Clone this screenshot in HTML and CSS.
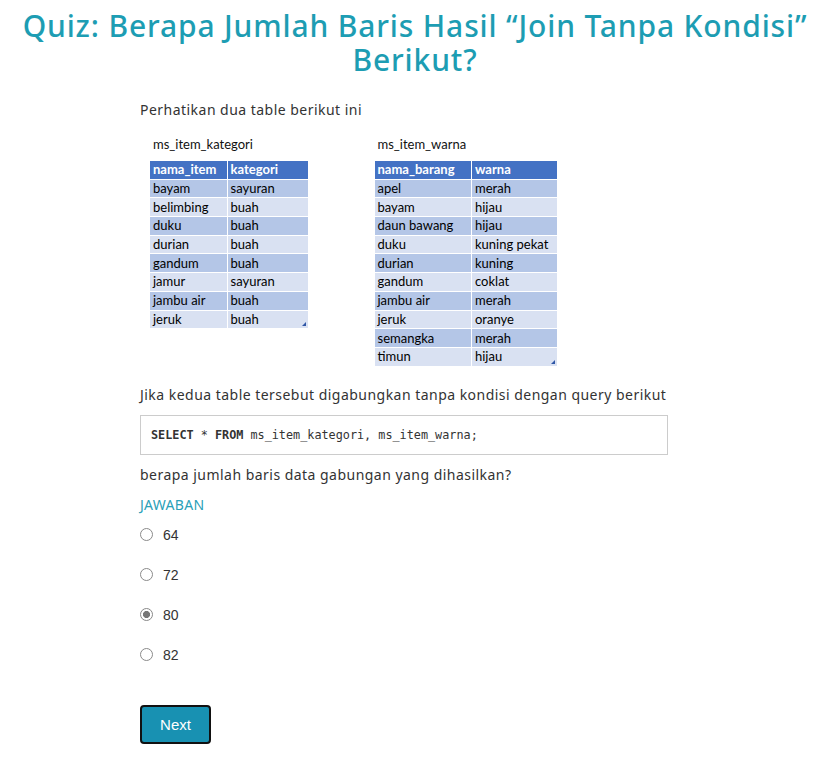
FILE: index.html
```html
<!DOCTYPE html>
<html lang="id">
<head>
<meta charset="utf-8">
<title>Quiz</title>
<link rel="stylesheet" href="styles.css">
</head>
<body>
<h1 class="title">Quiz: Berapa Jumlah Baris Hasil “Join Tanpa Kondisi” Berikut?</h1>
<main class="content">
  <p class="text intro">Perhatikan dua table berikut ini</p>
  <div class="tables">
    <div class="xl xl-first">
      <div class="xl-label">ms_item_kategori</div>
      <table class="sheet">
        <colgroup><col class="c76"><col class="c81"></colgroup>
        <tr class="head"><th>nama_item</th><th>kategori</th></tr>
        <tr class="odd"><td>bayam</td><td>sayuran</td></tr>
        <tr class="even"><td>belimbing</td><td>buah</td></tr>
        <tr class="odd"><td>duku</td><td>buah</td></tr>
        <tr class="even"><td>durian</td><td>buah</td></tr>
        <tr class="odd"><td>gandum</td><td>buah</td></tr>
        <tr class="even"><td>jamur</td><td>sayuran</td></tr>
        <tr class="odd"><td>jambu air</td><td>buah</td></tr>
        <tr class="even"><td>jeruk</td><td class="last">buah<span class="grip"></span></td></tr>
      </table>
    </div>
    <div class="xl xl-second">
      <div class="xl-label">ms_item_warna</div>
      <table class="sheet">
        <colgroup><col class="c96"><col class="c86"></colgroup>
        <tr class="head"><th>nama_barang</th><th>warna</th></tr>
        <tr class="odd"><td>apel</td><td>merah</td></tr>
        <tr class="even"><td>bayam</td><td>hijau</td></tr>
        <tr class="odd"><td>daun bawang</td><td>hijau</td></tr>
        <tr class="even"><td>duku</td><td>kuning pekat</td></tr>
        <tr class="odd"><td>durian</td><td>kuning</td></tr>
        <tr class="even"><td>gandum</td><td>coklat</td></tr>
        <tr class="odd"><td>jambu air</td><td>merah</td></tr>
        <tr class="even"><td>jeruk</td><td>oranye</td></tr>
        <tr class="odd"><td>semangka</td><td>merah</td></tr>
        <tr class="even"><td>timun</td><td class="last">hijau<span class="grip"></span></td></tr>
      </table>
    </div>
  </div>
  <p class="text">Jika kedua table tersebut digabungkan tanpa kondisi dengan query berikut</p>
  <pre class="code"><b>SELECT</b> * <b>FROM</b> ms_item_kategori, ms_item_warna;</pre>
  <p class="text">berapa jumlah baris data gabungan yang dihasilkan?</p>
  <div class="answer-label">JAWABAN</div>
  <div class="options">
    <label class="opt"><input type="radio" name="a" value="64"><span>64</span></label>
    <label class="opt"><input type="radio" name="a" value="72"><span>72</span></label>
    <label class="opt"><input type="radio" name="a" value="80" checked><span>80</span></label>
    <label class="opt"><input type="radio" name="a" value="82"><span>82</span></label>
  </div>
  <button class="next" type="button">Next</button>
</main>
</body>
</html>
```
FILE: styles.css
```css
html, body {
  margin: 0;
  padding: 0;
  background: #fff;
}
body {
  font-family: "Noto Sans", "DejaVu Sans", sans-serif;
  color: #333;
}
.title {
  margin: 9px 0 0;
  padding: 0 6px;
  text-align: center;
  font-family: "Noto Sans", sans-serif;
  font-weight: 500;
  font-size: 30px;
  line-height: 34px;
  letter-spacing: 0.85px;
  color: #1d9db3;
}
.content {
  width: 528px;
  margin: 0 0 0 140px;
  padding-top: 23px;
}
.text {
  margin: 0;
  font-size: 14px;
  line-height: 20px;
  letter-spacing: 0.47px;
  color: #333;
}
.tables {
  display: flex;
  gap: 66px;
  margin: 16px 0 0 10px;
  align-items: flex-start;
}
.xl-label {
  font-family: "Lato", "Liberation Sans", sans-serif;
  font-size: 13px;
  line-height: 16px;
  color: #111;
  padding-left: 3px;
  margin-bottom: 9px;
}
.sheet {
  border-collapse: collapse;
  table-layout: fixed;
  font-family: "Lato", "Liberation Sans", sans-serif;
  font-size: 13px;
  color: #000;
}
.c76 { width: 77px; }
.c81 { width: 81px; }
.c96 { width: 97px; }
.c86 { width: 86px; }
.sheet th, .sheet td {
  height: 17.7px;
  padding: 0 0 0 3px;
  text-align: left;
  border: 1px solid #fff;
  border-top: 0;
  border-bottom: 0;
  white-space: nowrap;
  line-height: 17px;
}
.sheet tr + tr td { border-top: 1px solid #fff; }
.sheet tr:first-child th { border-left: 0; }
.sheet tr td:first-child { border-left: 0; }
.head th {
  background: #4472c4;
  color: #fff;
  font-weight: 700;
}
.odd td { background: #b4c6e7; }
.even td { background: #d9e1f2; }
.last { position: relative; }
.grip {
  position: absolute;
  right: 2px;
  bottom: 2px;
  width: 0;
  height: 0;
  border-left: 4px solid transparent;
  border-bottom: 4px solid #2f56a6;
}
.tables + .text { margin-top: 19px; }
.code {
  margin: 10px 0 0;
  padding: 0 10px;
  height: 38px;
  border: 1px solid #ccc;
  font-family: "DejaVu Sans Mono", "Liberation Mono", monospace;
  font-size: 11.8px;
  line-height: 38px;
  color: #333;
}
.code b { font-weight: 700; }
.code + .text { margin-top: 10px; }
.answer-label {
  margin-top: 10px;
  font-size: 14px;
  line-height: 20px;
  letter-spacing: 0.3px;
  color: #2aa0b8;
}
.options {
  display: flex;
  flex-direction: column;
  gap: 20px;
  margin-top: 10px;
}
.opt {
  display: flex;
  align-items: center;
  height: 20px;
  font-family: "Liberation Sans", Arial, sans-serif;
  font-size: 14px;
  color: #333;
}
.opt input {
  appearance: none;
  -webkit-appearance: none;
  margin: 0 10px 0 0;
  width: 13px;
  height: 13px;
  border: 1px solid #8a8a8a;
  border-radius: 50%;
  box-sizing: border-box;
  background: #fff;
}
.opt input:checked {
  background: radial-gradient(circle, #777 0 3.3px, #fff 3.8px);
  border-color: #888;
}
.next {
  display: block;
  margin-top: 40px;
  width: 71px;
  height: 39px;
  background: #1891b2;
  border: 2px solid #111;
  border-radius: 4px;
  color: #fff;
  font-family: "Liberation Sans", Arial, sans-serif;
  font-size: 15px;
  padding: 0;
}
```
